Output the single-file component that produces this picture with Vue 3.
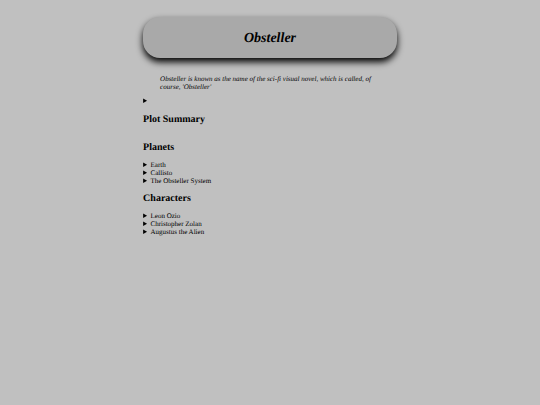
<script setup>
    const groups = [
        {title: 'Planets', items: ['Earth','Callisto','The Obsteller System']},
        {title: 'Characters', items: ['Leon Ozio','Christopher Zolan','Augustus the Alien']},
    ];
</script>

<template>
    <div class="page">
        <header class="banner">
            <h1>Obsteller</h1>
        </header>
        <blockquote>Obsteller is known as the name of the sci-fi visual novel, which is called, of course, 'Obsteller'</blockquote>
        <details>
            <summary aria-label="Plot Summary"></summary>
        </details>
        <h2 class="plot">Plot Summary</h2>
        <section v-for="group in groups" :key="group.title">
            <h2>{{ group.title }}</h2>
            <details v-for="item in group.items" :key="item">
                <summary>{{ item }}</summary>
            </details>
        </section>
    </div>
</template>

<style>
    body{
        background-color: #c0c0c0;
    }
</style>

<style scoped>
    .page{
        width: 47%;
        margin: 0 auto;
        padding-top: 17px;
        font-family: "Liberation Serif", "Times New Roman", serif;
        font-size: 7px;
        line-height: 8px;
        color: #000;
        text-rendering: geometricPrecision;
    }
    .banner{
        padding: 13px 12px 11px;
        border-radius: 17px;
        background-color: #a9a9a9;
        box-shadow: 0 4px 7px #000;
        text-align: center;
    }
    h1{
        margin: 0;
        font-size: 14px;
        line-height: 17px;
        font-style: italic;
    }
    blockquote{
        margin: 17px 17px 6px;
        font-style: italic;
    }
    summary{
        min-height: 8px;
    }
    h2{
        margin: 8px 0 7px;
        font-size: 10px;
        line-height: 12px;
    }
    .plot{
        margin: 9px 0 16px;
    }
</style>
